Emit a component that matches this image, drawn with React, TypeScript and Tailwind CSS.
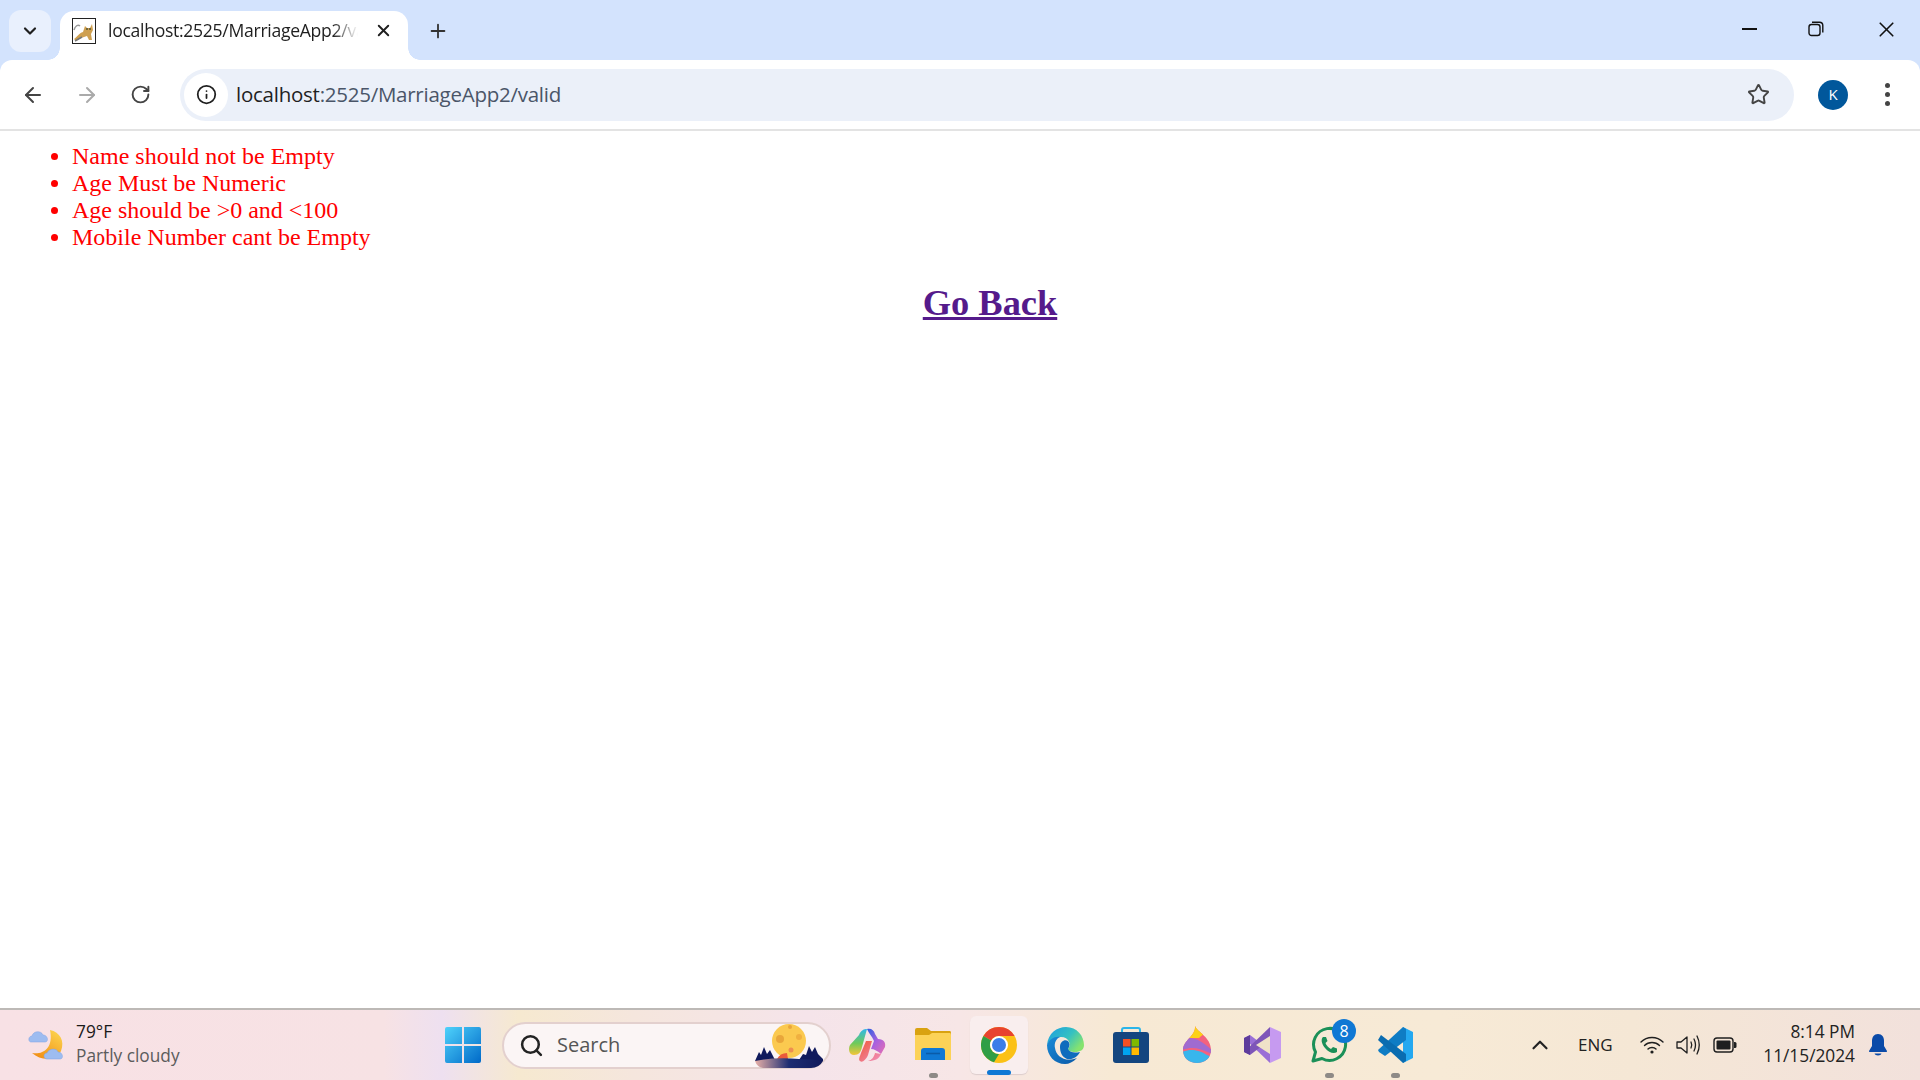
import { ArrowLeft, ArrowRight, ChevronDown, ChevronUp, Info, Plus, RotateCw, Search, Star, X } from "lucide-react";

const errors = [
  "Name should not be Empty",
  "Age Must be Numeric",
  "Age should be >0 and <100",
  "Mobile Number cant be Empty",
];

const Tomcat = () => (
  <svg width="24" height="26" viewBox="0 0 24 26" className="shrink-0">
    <rect x="0.5" y="0.5" width="23" height="25" fill="#fff" stroke="#222" />
    <path d="M2 21 C5 19 7 15 11 14 L13 8 L15 10 L18 10 L20 6 L21 12 L19 16 L20 22 L17 22 L15 18 L9 20 L4 23 Z" fill="#cfa050" />
    <path d="M2 12 C3 8 6 6 8 8" fill="none" stroke="#999" strokeWidth="1.5" />
    <path d="M3 23 L10 19" stroke="#777" strokeWidth="1.5" />
    <circle cx="15" cy="11" r="1" fill="#553" />
    <circle cx="18" cy="11" r="1" fill="#553" />
  </svg>
);

const RestoreIcon = () => (
  <svg width="16" height="16" viewBox="0 0 16 16" fill="none" stroke="#111" strokeWidth="1.4">
    <rect x="1" y="3.5" width="11" height="11" rx="2.5" />
    <path d="M4 1.2 H11.5 C13.5 1.2 14.8 2.5 14.8 4.5 V11.5" />
  </svg>
);

const WeatherIcon = () => (
  <svg width="38" height="36" viewBox="0 0 38 36">
    <defs>
      <linearGradient id="moon" x1="0.8" y1="0" x2="0.1" y2="1">
        <stop offset="0" stopColor="#fcd34d" />
        <stop offset="1" stopColor="#f08a12" />
      </linearGradient>
    </defs>
    <path d="M22 3 C32 5 37 14 33 24 C29 33 14 35 4 26 C14 28 26 22 22 3 Z" fill="url(#moon)" />
    <g fill="#9dbcf0" stroke="#7ea2e4" strokeWidth="0.5">
      <path d="M3 15 C0 15 0 9 4 9 C5 4 13 3 15 8 C20 8 21 15 17 15 Z" />
      <path d="M19 32 C15 32 15 26 19 26 C21 21 29 21 30 25 C35 25 36 32 32 32 Z" />
    </g>
  </svg>
);

const WindowsLogo = () => (
  <svg width="36" height="36" viewBox="0 0 36 36">
    <defs>
      <linearGradient id="win" x1="0" y1="0" x2="1" y2="1">
        <stop offset="0" stopColor="#4fd2fb" />
        <stop offset="1" stopColor="#0069c8" />
      </linearGradient>
    </defs>
    <path d="M2 0 H17 V17 H0 V2 Q0 0 2 0 Z M19 0 H34 Q36 0 36 2 V17 H19 Z M0 19 H17 V36 H2 Q0 36 0 34 Z M19 19 H36 V34 Q36 36 34 36 H19 Z" fill="url(#win)" />
  </svg>
);

const MoonScene = () => (
  <svg width="68" height="46" viewBox="0 0 68 46">
    <defs>
      <linearGradient id="ground" x1="0" y1="0" x2="1" y2="0">
        <stop offset="0" stopColor="#e8b0a8" />
        <stop offset="0.5" stopColor="#1d2d72" />
        <stop offset="1" stopColor="#101a5c" />
      </linearGradient>
    </defs>
    <circle cx="34" cy="18" r="17" fill="#fbc94f" />
    <circle cx="25" cy="16" r="4" fill="#e9a63a" />
    <circle cx="44" cy="14" r="3" fill="#f0b040" />
    <circle cx="36" cy="27" r="2.5" fill="#ee8f50" />
    <circle cx="35" cy="4" r="2" fill="#e9a63a" />
    <path d="M22 36 Q25 30 32 30 L33 36 Z" fill="#ea5a3a" />
    <path d="M0 38 L4 29 L6 32 L9 24 L12 31 L15 27 L18 33 L20 37 L44 37 L48 31 L51 32 L54 23 L57 29 L60 24 L63 31 L68 36 L68 38 Z" fill="#101a5c" />
    <path d="M0 38 Q20 34 44 36 Q58 36 68 38 Q64 45 56 45 L8 45 Q2 44 0 38 Z" fill="url(#ground)" />
  </svg>
);

const Copilot = () => (
  <svg width="38" height="36" viewBox="0 0 38 36">
    <defs>
      <linearGradient id="cp1" x1="0" y1="0" x2="0" y2="1">
        <stop offset="0" stopColor="#2fb8e8" />
        <stop offset="0.55" stopColor="#6fca5a" />
        <stop offset="1" stopColor="#f5c53a" />
      </linearGradient>
      <linearGradient id="cp2" x1="0" y1="0" x2="1" y2="1">
        <stop offset="0" stopColor="#2860e0" />
        <stop offset="0.5" stopColor="#a860e0" />
        <stop offset="1" stopColor="#e870b0" />
      </linearGradient>
      <linearGradient id="cp3" x1="0" y1="0" x2="1" y2="1">
        <stop offset="0" stopColor="#f05a3a" />
        <stop offset="1" stopColor="#f090c0" />
      </linearGradient>
    </defs>
    <path d="M11 8 C13 3 16 2 19 2 L14 20 C13 25 11 28 6 28 C1 28 0 22 2 18 Z" fill="url(#cp1)" />
    <path d="M19 2 C23 1 26 3 27 7 L30 12 C36 12 38 16 37 20 L33 27 C30 24 26 22 23 22 L26 14 C24 9 21 7 19 2 Z" fill="url(#cp2)" />
    <path d="M13 26 L18 14 L24 14 L20 28 C18 33 14 36 12 34 C10 33 12 29 13 26 Z M20 34 C24 33 26 30 27 26 L33 27 C31 32 27 34 20 34 Z" fill="url(#cp3)" />
  </svg>
);

const Folder = () => (
  <svg width="38" height="36" viewBox="0 0 38 36">
    <path d="M1 3 Q1 1 3 1 H13 L17 4 H36 Q37 4 37 6 V10 H1 Z" fill="#d9a210" />
    <path d="M1 8 H15 L18 6 H36 Q37 6 37 8 V33 H1 Z" fill="#fcd257" />
    <path d="M7 33 V24 Q7 21 10 21 H28 Q31 21 31 24 V33 Z" fill="#0f78d4" />
    <path d="M12 26.5 H26" stroke="#0a5ba8" strokeWidth="1.6" />
  </svg>
);

const Chrome = () => (
  <svg width="36" height="36" viewBox="0 0 36 36">
    <circle cx="18" cy="18" r="18" fill="#fbc116" />
    <path d="M18 0 A18 18 0 0 1 33.6 9 H18 A9 9 0 0 0 10.2 13.5 L2.4 9 A18 18 0 0 1 18 0 Z" fill="#e8432f" />
    <path d="M2.4 9 L10.2 13.5 A9 9 0 0 0 18 27 L13 35.3 A18 18 0 0 1 2.4 9 Z" fill="#2f9e46" />
    <circle cx="18" cy="18" r="9" fill="#fff" />
    <circle cx="18" cy="18" r="7" fill="#3b7de8" />
  </svg>
);

const Edge = () => (
  <svg width="37" height="37" viewBox="0 0 37 37">
    <defs>
      <linearGradient id="edge1" x1="0" y1="0" x2="1" y2="0.6">
        <stop offset="0" stopColor="#1b9de2" />
        <stop offset="0.6" stopColor="#35c1c1" />
        <stop offset="1" stopColor="#86e36e" />
      </linearGradient>
      <linearGradient id="edge2" x1="0" y1="0" x2="1" y2="1">
        <stop offset="0" stopColor="#1a8bd8" />
        <stop offset="1" stopColor="#0b5aa8" />
      </linearGradient>
    </defs>
    <path d="M0 18 C1 6 10 0 19 0 C30 0 37 9 37 18 C37 23 33 25 28 25 C24 25 21 24 21 22 C25 18 22 10 14 10 C7 10 2 14 0 18 Z" fill="url(#edge1)" />
    <path d="M0 18 C2 12 8 9 13 10 C9 12 7 16 8 21 C9 29 18 36 30 31 C26 35 22 37 18 37 C8 37 0 29 0 18 Z" fill="url(#edge2)" />
    <path d="M13 20 C13 14 18 12 21 14 C23 16 23 19 21 22 C23 26 28 26 33 25 C30 31 24 33 20 32 C15 30 13 25 13 20 Z" fill="#0f6cbd" />
  </svg>
);

const Store = () => (
  <svg width="36" height="36" viewBox="0 0 36 36">
    <path d="M9 6 V3 Q9 1 11 1 H25 Q27 1 27 3 V6" fill="none" stroke="#2ab5ea" strokeWidth="2" />
    <rect x="0" y="5" width="36" height="31" rx="3" fill="#14467f" />
    <rect x="10" y="12" width="7.5" height="7.5" fill="#f25022" />
    <rect x="18.5" y="12" width="7.5" height="7.5" fill="#7fba00" />
    <rect x="10" y="20.5" width="7.5" height="7.5" fill="#00a4ef" />
    <rect x="18.5" y="20.5" width="7.5" height="7.5" fill="#ffb900" />
  </svg>
);

const Drop = () => (
  <svg width="30" height="38" viewBox="0 0 30 38">
    <defs>
      <clipPath id="dropClip">
        <path d="M13 0 C15 6 29 11 29 24 C29 32 23 37 15 37 C7 37 1 32 1 24 C1 14 14 10 13 0 Z" />
      </clipPath>
    </defs>
    <g clipPath="url(#dropClip)">
      <rect width="30" height="38" fill="#f3627e" />
      <path d="M0 0 H30 V9 C24 6 20 9 17 12 H0 Z" fill="#fcd116" />
      <path d="M0 15 C8 9 16 12 30 24 V28 C18 22 10 20 0 24 Z" fill="#a06bd0" />
      <path d="M0 26 C10 22 18 24 30 32 V38 H0 Z" fill="#38b6ec" />
    </g>
  </svg>
);

const VisualStudio = () => (
  <svg width="38" height="38" viewBox="0 0 38 38">
    <path d="M26 1 L37 6 V32 L26 37 Z" fill="#c69af0" />
    <path d="M0 12 L6 9 L26 24 V37 Z" fill="#9a6fd6" />
    <path d="M26 1 V14 L6 29 L0 26 Z" fill="#7e55b8" />
    <path d="M0 12 L6 9 V29 L0 26 Z" fill="#5e3c9c" />
    <path d="M12 19 L26 10 V28 Z" fill="#efe2c8" />
  </svg>
);

const WhatsApp = () => (
  <svg width="38" height="38" viewBox="0 0 38 38" fill="none">
    <path d="M3 35 L5.5 26 A16 16 0 1 1 12 32.5 Z" stroke="#1b9058" strokeWidth="3" strokeLinejoin="round" />
    <path d="M13 11 C11 13 11 17 15 22 C19 27 24 28 27 26 L27 22.5 L23 21 L21 23 C19 22 16 19 15.5 17 L17.5 15 L16 11 Z" fill="#1b9058" />
  </svg>
);

const VsCode = () => (
  <svg width="36" height="38" viewBox="0 0 36 38">
    <path d="M26 1 L36 6 V32 L26 37 Z" fill="#24a8f0" />
    <path d="M26 1 L29 3 V14 L8 30 L2 26 L1 24 Z" fill="#0f7cc4" />
    <path d="M1 14 L4 9 L29 28 V35 L26 37 Z" fill="#0a6cb0" />
  </svg>
);

const WifiIcon = () => (
  <svg width="24" height="20" viewBox="0 0 24 20" fill="none" stroke="#1f1f1f" strokeWidth="1.4" strokeLinecap="round">
    <path d="M1 7 C7 1 17 1 23 7" />
    <path d="M4.5 10.5 C8.5 6.5 15.5 6.5 19.5 10.5" />
    <path d="M8 14 C10 12 14 12 16 14" />
    <circle cx="12" cy="17" r="1.6" fill="#1f1f1f" stroke="none" />
  </svg>
);

const VolumeIcon = () => (
  <svg width="25" height="22" viewBox="0 0 25 22" fill="none" stroke="#1f1f1f" strokeWidth="1.3" strokeLinecap="round" strokeLinejoin="round">
    <path d="M1 8 H5 L11 3 V19 L5 14 H1 Z" />
    <path d="M15 8 C16 10 16 12 15 14" />
    <path d="M18 5 C20 9 20 13 18 17" />
    <path d="M21 2 C24 8 24 14 21 20" />
  </svg>
);

const BatteryIcon = () => (
  <svg width="24" height="16" viewBox="0 0 24 16">
    <rect x="1" y="1" width="19" height="14" rx="3" fill="none" stroke="#1f1f1f" strokeWidth="1.4" />
    <rect x="3.5" y="3.5" width="14" height="9" rx="1" fill="#1f1f1f" />
    <path d="M21 5 H22 Q23.5 5 23.5 6.5 V9.5 Q23.5 11 22 11 H21 Z" fill="#1f1f1f" />
  </svg>
);

const BellIcon = () => (
  <svg width="20" height="24" viewBox="0 0 20 24">
    <path d="M10 1 C14 1 16 4 16 8 V13 L19 18 Q19.5 19 18 19 H2 Q0.5 19 1 18 L4 13 V8 C4 4 6 1 10 1 Z" fill="#0a4aa8" />
    <path d="M6.5 20.5 H13.5 C13 23 7 23 6.5 20.5 Z" fill="#0a4aa8" />
  </svg>
);

const apps = [
  { icon: <Copilot />, dot: false },
  { icon: <Folder />, dot: true },
  { icon: <Chrome />, dot: false, active: true },
  { icon: <Edge />, dot: false },
  { icon: <Store />, dot: false },
  { icon: <Drop />, dot: false },
  { icon: <VisualStudio />, dot: false },
  { icon: <WhatsApp />, dot: true, badge: "8" },
  { icon: <VsCode />, dot: true },
];

const App = () => {
  return (
    <div className="flex h-screen w-full flex-col overflow-hidden bg-white">
      <div className="shrink-0 bg-[#d3e3fd]">
        {/* browser tab strip */}
        <div className="flex h-[60px] items-end font-['Open_Sans',sans-serif]">
          <div className="mb-[-1px] ml-[9px] flex h-[42px] w-[42px] self-center items-center justify-center rounded-xl bg-[#e9f0fd]">
            <ChevronDown size={20} strokeWidth={2.6} className="text-[#1f1f1f]" />
          </div>
          <div className="relative ml-[9px] flex h-[49px] w-[348px] items-center rounded-t-[14px] bg-white pb-[10px] pl-3 pr-[15px]">
            <div className="absolute bottom-0 left-[-12px] h-[12px] w-[12px] bg-[radial-gradient(circle_at_0_0,transparent_11.5px,white_12px)]" />
            <div className="absolute bottom-0 right-[-12px] h-[12px] w-[12px] bg-[radial-gradient(circle_at_100%_0,transparent_11.5px,white_12px)]" />
            <Tomcat />
            <span className="ml-3 w-[250px] overflow-hidden whitespace-nowrap text-[17.6px] tracking-[-0.3px] text-[#1f1f1f] [mask-image:linear-gradient(to_right,black_90%,transparent)]">
              localhost:2525/MarriageApp2/valid
            </span>
            <X size={19} strokeWidth={2.4} className="ml-auto text-[#1f1f1f]" />
          </div>
          <div className="ml-[19px] flex h-[49px] items-center pb-[10px]">
            <Plus size={22} strokeWidth={2} className="text-[#333]" />
          </div>
          <div className="ml-auto flex h-full items-center pb-[2px]">
            <div className="flex w-[62px] justify-center">
              <div className="h-[2px] w-[15px] bg-[#111]" />
            </div>
            <div className="flex w-[72px] justify-center">
              <RestoreIcon />
            </div>
            <div className="flex w-[68px] justify-center">
              <X size={25} strokeWidth={1.6} className="text-[#111]" />
            </div>
          </div>
        </div>

        {/* address bar */}
        <div className="flex h-[71px] items-center rounded-t-xl border-b-2 border-[#e3e3e3] bg-white font-['Open_Sans',sans-serif]">
          <div className="ml-[21px] flex w-[146px] items-center">
            <ArrowLeft size={24} strokeWidth={2} className="text-[#444]" />
            <ArrowRight size={24} strokeWidth={2} className="ml-[30px] text-[#aaa]" />
            <RotateCw size={21} strokeWidth={2.2} className="ml-[31px] text-[#444]" />
          </div>
          <div className="ml-[13px] flex h-[52px] w-[1614px] items-center rounded-full bg-[#ebf0f9] pl-[4px] pr-[24px]">
            <div className="flex h-[44px] w-[44px] items-center justify-center rounded-full bg-white">
              <Info size={21} strokeWidth={2} className="text-[#1f1f1f]" />
            </div>
            <span className="ml-[8px] text-[20.5px] tracking-[-0.25px] text-[#4a5568]">
              <span className="text-[#1f1f1f]">localhost</span>:2525/MarriageApp2/valid
            </span>
            <Star size={23} strokeWidth={2} className="ml-auto text-[#444]" />
          </div>
          <div className="ml-[24px] flex h-[30px] w-[30px] items-center justify-center rounded-full bg-[#01579b] text-[15px] text-white">
            K
          </div>
          <div className="ml-[37px] flex flex-col gap-[4px]">
            <div className="h-[5px] w-[5px] rounded-full bg-[#444]" />
            <div className="h-[5px] w-[5px] rounded-full bg-[#444]" />
            <div className="h-[5px] w-[5px] rounded-full bg-[#444]" />
          </div>
        </div>
      </div>

      {/* page content */}
      <div className="flex-1 pt-[12px] font-['Liberation_Serif',serif]">
        <ul className="list-disc pl-[72px] text-[24px] leading-[27px] text-[#ff0000]">
          {errors.map((err) => (
            <li key={err}>{err}</li>
          ))}
        </ul>
        <div className="mt-[31px] pl-[60px] text-center">
          <a href="#back" className="text-[36.4px] font-bold leading-[42px] text-[#551a8b] underline">
            Go Back
          </a>
        </div>
      </div>

      {/* windows taskbar */}
      <div className="flex h-[72px] shrink-0 items-center border-t-2 border-[#bdb9b6] bg-[linear-gradient(90deg,#f8e1e5_0%,#f7e2e4_20%,#eee0f0_23%,#f6e9d0_27%,#f5e6dd_33%,#f5e4ea_42%,#f7e6e6_50%,#f7e9d4_58%,#f7ead6_75%,#f5e7d5_85%,#f2e1dc_100%)] font-['Open_Sans',sans-serif]">
        <div className="ml-[28px] flex w-[417px] items-center">
          <WeatherIcon />
          <div className="ml-[10px] mt-[-2px] text-[17.3px] leading-[24px]">
            <div className="text-[#1a1a1a]">79°F</div>
            <div className="text-[#5c5c5c]">Partly cloudy</div>
          </div>
        </div>
        <WindowsLogo />
        <div className="relative ml-[21px] flex h-[47px] w-[329px] items-center rounded-full border-2 border-[#e3d0ce] bg-[#fbf5f5] pl-[15px]">
          <Search size={25} strokeWidth={2.4} className="text-[#222]" />
          <span className="ml-[13px] text-[20px] text-[#555]">Search</span>
          <div className="absolute bottom-[-2px] right-[6px]">
            <MoonScene />
          </div>
        </div>
        <div className="ml-[3px] flex items-center">
          {apps.map((app, i) => (
            <div
              key={i}
              className={
                app.active
                  ? "relative flex h-[58px] w-[58px] mx-[4px] items-center justify-center rounded-md bg-[#f9eeee] shadow-[0_1px_1px_#dccdcd]"
                  : "relative flex h-[58px] w-[66px] items-center justify-center"
              }
            >
              {app.icon}
              {app.badge && (
                <div className="absolute right-[6px] top-[3px] flex h-[24px] w-[24px] items-center justify-center rounded-full bg-[#0f78d4] text-[16px] text-white">
                  {app.badge}
                </div>
              )}
              {app.dot && <div className="absolute bottom-[-4px] h-[5px] w-[9px] rounded-full bg-[#8e8a86]" />}
              {app.active && <div className="absolute bottom-[-1px] h-[5px] w-[24px] rounded-full bg-[#0f78d4]" />}
            </div>
          ))}
        </div>
        <div className="ml-[99px] flex items-center">
          <ChevronUp size={26} strokeWidth={2} className="text-[#222]" />
          <span className="ml-[25px] text-[17px] text-[#222]">ENG</span>
          <div className="ml-[27px]">
            <WifiIcon />
          </div>
          <div className="ml-[12px]">
            <VolumeIcon />
          </div>
          <div className="ml-[12px]">
            <BatteryIcon />
          </div>
        </div>
        <div className="ml-auto mt-[-2px] text-right text-[17.3px] leading-[24px] text-[#222]">
          <div>8:14 PM</div>
          <div>11/15/2024</div>
        </div>
        <div className="ml-[13px] mr-[32px]">
          <BellIcon />
        </div>
      </div>
    </div>
  );
};

export default App;
